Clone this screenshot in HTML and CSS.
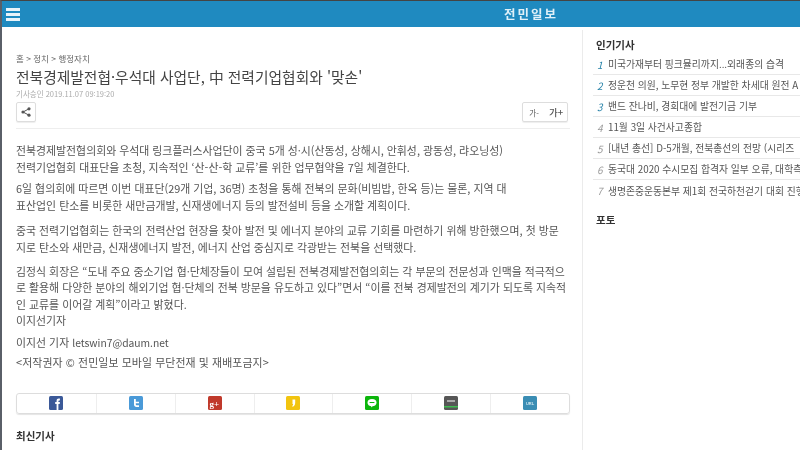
FILE: index.html
```html
<!DOCTYPE html>
<html lang="ko">
<head>
<meta charset="utf-8">
<title>전민일보</title>
<link rel="stylesheet" href="styles.css">
</head>
<body>
<div class="page">
  <header class="topbar">
    <div class="burger"><span></span><span></span><span></span></div>
    <div class="logo">전민일보</div>
  </header>
  <div class="columns">
    <main class="main">
      <nav class="crumbs">홈 &gt; 정치 &gt; 행정자치</nav>
      <h1 class="title">전북경제발전협·우석대 사업단, 中 전력기업협회와 '맞손'</h1>
      <div class="date">기사승인 2019.11.07 09:19:20</div>
      <div class="tools">
        <button class="btn share-btn" aria-label="공유">
          <svg width="10" height="10" viewBox="0 0 10 10"><path d="M8 1.8 2 5l6 3.2" fill="none" stroke="#555" stroke-width="1"/><circle cx="8" cy="1.8" r="1.6" fill="#555"/><circle cx="2" cy="5" r="1.6" fill="#555"/><circle cx="8" cy="8.2" r="1.6" fill="#555"/></svg>
        </button>
        <div class="btn size-group"><span class="size small">가-</span><span class="size big">가+</span></div>
      </div>
      <article class="body">
        <p class="gap-s">전북경제발전협의회와 우석대 링크플러스사업단이 중국 5개 성·시(산동성, 상해시, 안휘성, 광동성, 랴오닝성)<br>전력기업협회 대표단을 초청, 지속적인 ‘산-산-학 교류’를 위한 업무협약을 7일 체결한다.</p>
        <p class="gap-l">6일 협의회에 따르면 이번 대표단(29개 기업, 36명) 초청을 통해 전북의 문화(비빔밥, 한옥 등)는 물론, 지역 대<br>표산업인 탄소를 비롯한 새만금개발, 신재생에너지 등의 발전설비 등을 소개할 계획이다.</p>
        <p class="gap-m">중국 전력기업협회는 한국의 전력산업 현장을 찾아 발전 및 에너지 분야의 교류 기회를 마련하기 위해 방한했으며, 첫 방문<br>지로 탄소와 새만금, 신재생에너지 발전, 에너지 산업 중심지로 각광받는 전북을 선택했다.</p>
        <p class="gap-s">김정식 회장은 “도내 주요 중소기업 협·단체장들이 모여 설립된 전북경제발전협의회는 각 부문의 전문성과 인맥을 적극적으<br>로 활용해 다양한 분야의 해외기업 협·단체의 전북 방문을 유도하고 있다”면서 “이를 전북 경제발전의 계기가 되도록 지속적<br>인 교류를 이어갈 계획”이라고 밝혔다.<br>이지선기자</p>
        <p class="gap-xs">이지선 기자 <span class="email">letswin7@daum.net</span></p>
        <p class="copy">&lt;저작권자 © 전민일보 모바일 무단전재 및 재배포금지&gt;</p>
      </article>
      <div class="sharebar">
        <div class="cell"><svg class="ico" viewBox="0 0 14 14"><rect width="14" height="14" rx="1.5" fill="#3b5998"/><path d="M7.6 14V8H6.2V6h1.4V4.700C7.600 3.200 8.500 2.500 9.800 2.500h1.100v1.900h-.7c-.6 0-.8.300-.8.800V6h1.500l-.2 2H9.400v6z" fill="#fff"/></svg></div>
        <div class="cell"><svg class="ico" viewBox="0 0 14 14"><rect width="14" height="14" rx="1.5" fill="#4a9ad8"/><path d="M5 3v5.500C5 10 6 11 7.500 11H10V9.300H7.800c-.6 0-1-.4-1-1V7.300H10V5.700H6.800V3z" fill="#fff"/></svg></div>
        <div class="cell"><svg class="ico" viewBox="0 0 14 14"><rect width="14" height="14" rx="1.5" fill="#c0392b"/><text x="1.5" y="10.5" class="gplus">g+</text></svg></div>
        <div class="cell"><svg class="ico" viewBox="0 0 14 14"><rect width="14" height="14" rx="1.5" fill="#f2c40f"/><path d="M6.500 3.500h2.700v3c0 2.200-.9 3.600-2.600 4.300l-.4-.9c.7-.5 1-1.100 1-1.900H6.500z" fill="#fff"/></svg></div>
        <div class="cell"><svg class="ico" viewBox="0 0 14 14"><rect width="14" height="14" rx="1.5" fill="#0cb60c"/><ellipse cx="7" cy="6.6" rx="4.5" ry="3.7" fill="#fff"/><path d="M6 9.500h2L6.500 11.500z" fill="#fff"/><rect x="4.600" y="6" width="4.800" height="1" fill="#0cb60c"/></svg></div>
        <div class="cell"><svg class="ico" viewBox="0 0 14 14"><rect width="14" height="14" rx="1.5" fill="#565656"/><rect x="3" y="4" width="8" height="2" fill="#aaa"/><rect y="10" width="14" height="1.5" fill="#3fb950"/></svg></div>
        <div class="cell"><svg class="ico" viewBox="0 0 14 14"><rect width="14" height="14" rx="1.5" fill="#3a8db4"/><text x="7" y="9" class="url">URL</text></svg></div>
      </div>
      <h2 class="section latest">최신기사</h2>
    </main>
    <aside class="side">
      <h2 class="section">인기기사</h2>
      <ol class="rank">
        <li><i class="hot">1</i><span>미국가재부터 핑크뮬리까지...외래종의 습격</span></li>
        <li><i class="hot">2</i><span>정운천 의원, 노무현 정부 개발한 차세대 원전 A</span></li>
        <li><i class="hot">3</i><span>밴드 잔나비, 경희대에 발전기금 기부</span></li>
        <li><i>4</i><span>11월 3일 사건사고종합</span></li>
        <li><i>5</i><span>[내년 총선] D-5개월, 전북총선의 전망 (시리즈</span></li>
        <li><i>6</i><span>동국대 2020 수시모집 합격자 일부 오류, 대학측</span></li>
        <li><i>7</i><span>생명존중운동본부 제1회 전국하천걷기 대회 진행</span></li>
      </ol>
      <h2 class="section photo">포토</h2>
    </aside>
  </div>
</div>
</body>
</html>
```
FILE: styles.css
```css
* { box-sizing: border-box; }
html, body { margin: 0; height: 450px; overflow: hidden; background: #fff; }
body { font-family: "Noto Sans CJK KR", "Noto Sans", sans-serif; color: #555; }
.page { height: 450px; border-left: 2px solid #5a5f68; border-top: 1px solid #444; overflow: hidden; filter: blur(.3px); }
.topbar { height: 26px; background: #1f8ac0; display: flex; align-items: center; }
.burger { margin-left: 4px; width: 14px; display: flex; flex-direction: column; gap: 2px; }
.burger span { display: block; height: 3px; background: #e8f3f9; }
.logo { margin-left: 484px; margin-top: -2px; color: #dff0f8; font-size: 12.5px; font-weight: 700; letter-spacing: 2px; }
.columns { display: flex; height: 420px; margin-top: 3px; }
.main { width: 581px; padding: 21px 12px 0 14px; border-right: 1px solid #ebebeb; }
.crumbs { font-size: 8.5px; line-height: 14px; color: #666; }
.title { margin: 1px 0 0; font-size: 14.75px; font-weight: 400; line-height: 22px; color: #444; white-space: nowrap; }
.date { font-size: 7.5px; line-height: 12px; color: #aaa; }
.tools { display: flex; justify-content: space-between; margin-top: 2px; padding: 0 2px 6px 0; border-bottom: 1px solid #eee; }
.btn { height: 20px; padding: 0; border: 1px solid #ddd; border-radius: 2px; background: #fff; display: flex; align-items: center; justify-content: center; box-shadow: 0 1px 1px #eee; }
.share-btn { width: 20px; }
.size-group { width: 46px; }
.size { flex: 1; text-align: center; color: #555; }
.small { font-size: 7.5px; }
.big { font-size: 9.5px; font-weight: 500; }
.body { margin-top: 13px; font-size: 10.9px; line-height: 16.5px; color: #555; white-space: nowrap; }
.body p { margin: 0; }
.body .gap-xs { margin-bottom: 3px; }
.body .gap-s { margin-bottom: 5px; }
.body .gap-m { margin-bottom: 7.5px; }
.body .gap-l { margin-bottom: 9px; }
.email { font-size: 10.3px; }
.copy { letter-spacing: .1px; }
.sharebar { margin-top: 22px; width: 554px; height: 21px; display: grid; grid-template-columns: repeat(7, 1fr); border: 1px solid #ddd; border-radius: 3px; box-shadow: 0 1px 1px #e5e5e5; }
.cell { display: flex; align-items: center; justify-content: center; border-left: 1px solid #eee; }
.cell:first-child { border-left: 0; }
.ico { width: 14px; height: 14px; display: block; }
.gplus { font: 700 9px "Liberation Serif", serif; fill: #fff; }
.url { font: 700 4px "Liberation Sans", sans-serif; fill: #cfe6f0; text-anchor: middle; }
.section { margin: 0; font-size: 10.5px; font-weight: 700; line-height: 14px; color: #333; }
.latest { margin-top: 15px; }
.side { flex: 1; min-width: 0; padding: 8px 0 0 13px; overflow: hidden; }
.rank { list-style: none; margin: 2px 0 0 -3px; padding: 0; }
.rank li { height: 21px; display: flex; align-items: center; gap: 3px; border-bottom: 1px solid #e8e8e8; font-size: 9.8px; white-space: nowrap; color: #555; padding-left: 4px; }
.rank li:last-child { border-bottom: 0; }
.rank i { width: 8px; flex: none; color: #999; font-size: 10px; }
.rank i.hot { color: #2e86ab; }
.photo { margin-top: 12px; }
```
